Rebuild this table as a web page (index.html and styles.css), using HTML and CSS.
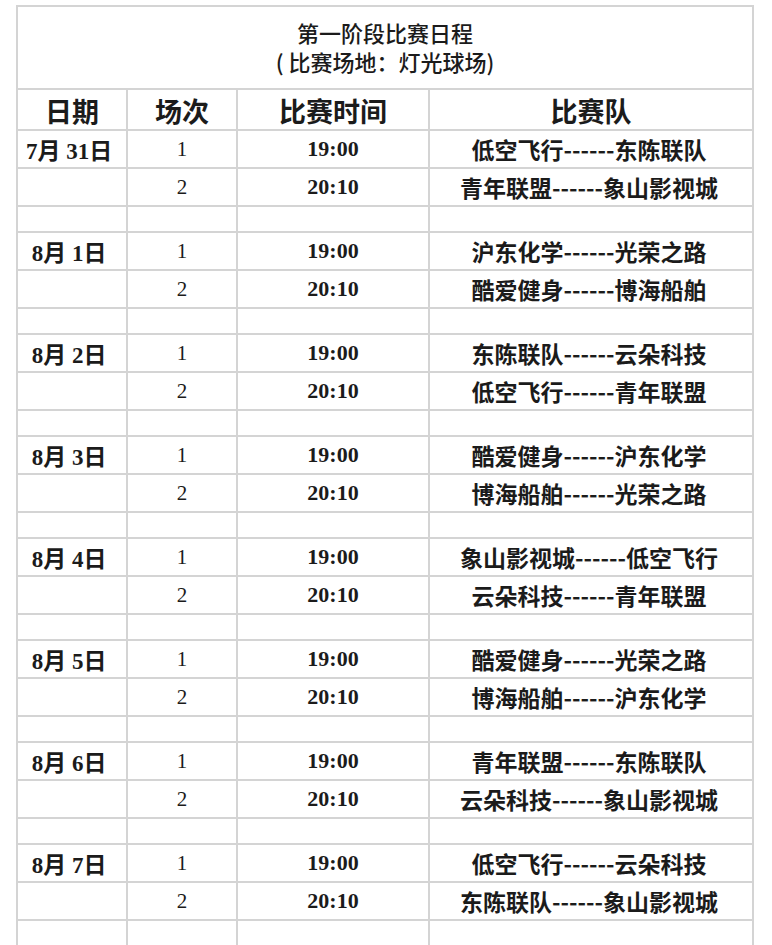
FILE: index.html
```html
<!DOCTYPE html>
<html lang="zh-CN">
<head>
<meta charset="utf-8">
<title>第一阶段比赛日程</title>
<link rel="stylesheet" href="styles.css">
</head>
<body>
<div class="sheet">
  <div class="cell title">第一阶段比赛日程<br>( 比赛场地：灯光球场)</div>

  <div class="cell head">日期</div>
  <div class="cell head">场次</div>
  <div class="cell head">比赛时间</div>
  <div class="cell head">比赛队</div>

  <div class="cell date">7月 31日</div>
  <div class="cell num">1</div>
  <div class="cell time">19:00</div>
  <div class="cell team">低空飞行------东陈联队</div>
  <div class="cell date"></div>
  <div class="cell num">2</div>
  <div class="cell time">20:10</div>
  <div class="cell team">青年联盟------象山影视城</div>
  <div class="cell"></div><div class="cell"></div><div class="cell"></div><div class="cell"></div>

  <div class="cell date">8月 1日</div>
  <div class="cell num">1</div>
  <div class="cell time">19:00</div>
  <div class="cell team">沪东化学------光荣之路</div>
  <div class="cell date"></div>
  <div class="cell num">2</div>
  <div class="cell time">20:10</div>
  <div class="cell team">酷爱健身------博海船舶</div>
  <div class="cell"></div><div class="cell"></div><div class="cell"></div><div class="cell"></div>

  <div class="cell date">8月 2日</div>
  <div class="cell num">1</div>
  <div class="cell time">19:00</div>
  <div class="cell team">东陈联队------云朵科技</div>
  <div class="cell date"></div>
  <div class="cell num">2</div>
  <div class="cell time">20:10</div>
  <div class="cell team">低空飞行------青年联盟</div>
  <div class="cell"></div><div class="cell"></div><div class="cell"></div><div class="cell"></div>

  <div class="cell date">8月 3日</div>
  <div class="cell num">1</div>
  <div class="cell time">19:00</div>
  <div class="cell team">酷爱健身------沪东化学</div>
  <div class="cell date"></div>
  <div class="cell num">2</div>
  <div class="cell time">20:10</div>
  <div class="cell team">博海船舶------光荣之路</div>
  <div class="cell"></div><div class="cell"></div><div class="cell"></div><div class="cell"></div>

  <div class="cell date">8月 4日</div>
  <div class="cell num">1</div>
  <div class="cell time">19:00</div>
  <div class="cell team">象山影视城------低空飞行</div>
  <div class="cell date"></div>
  <div class="cell num">2</div>
  <div class="cell time">20:10</div>
  <div class="cell team">云朵科技------青年联盟</div>
  <div class="cell"></div><div class="cell"></div><div class="cell"></div><div class="cell"></div>

  <div class="cell date">8月 5日</div>
  <div class="cell num">1</div>
  <div class="cell time">19:00</div>
  <div class="cell team">酷爱健身------光荣之路</div>
  <div class="cell date"></div>
  <div class="cell num">2</div>
  <div class="cell time">20:10</div>
  <div class="cell team">博海船舶------沪东化学</div>
  <div class="cell"></div><div class="cell"></div><div class="cell"></div><div class="cell"></div>

  <div class="cell date">8月 6日</div>
  <div class="cell num">1</div>
  <div class="cell time">19:00</div>
  <div class="cell team">青年联盟------东陈联队</div>
  <div class="cell date"></div>
  <div class="cell num">2</div>
  <div class="cell time">20:10</div>
  <div class="cell team">云朵科技------象山影视城</div>
  <div class="cell"></div><div class="cell"></div><div class="cell"></div><div class="cell"></div>

  <div class="cell date">8月 7日</div>
  <div class="cell num">1</div>
  <div class="cell time">19:00</div>
  <div class="cell team">低空飞行------云朵科技</div>
  <div class="cell date"></div>
  <div class="cell num">2</div>
  <div class="cell time">20:10</div>
  <div class="cell team">东陈联队------象山影视城</div>
  <div class="cell"></div><div class="cell"></div><div class="cell"></div><div class="cell"></div>
</div>
</body>
</html>
```

FILE: styles.css
```css
html, body {
  margin: 0;
  padding: 0;
  background: #ffffff;
}

body {
  font-family: "Noto Sans CJK SC", sans-serif;
  color: #1b1b1b;
}

.sheet {
  box-sizing: border-box;
  width: 738px;
  margin: 5px 0 0 16px;
  padding: 2px;
  display: grid;
  grid-template-columns: 108px 108px 190px 322px;
  grid-template-rows: 81px 39px repeat(8, 36px 36px 24px);
  gap: 2px;
  background: #d4d4d4;
}

.cell {
  background: #ffffff;
  display: flex;
  align-items: center;
  justify-content: center;
  white-space: nowrap;
  overflow: hidden;
  box-sizing: border-box;
}

.title {
  grid-column: 1 / span 4;
  display: block;
  text-align: center;
  padding-top: 11px;
  font-size: 22px;
  line-height: 29px;
  font-weight: 500;
}

.head {
  font-size: 27px;
  font-weight: 700;
  line-height: 1;
  padding-top: 2px;
}

.date {
  font-family: "Liberation Serif", "Noto Sans CJK SC", serif;
  font-weight: 700;
  font-size: 23px;
  padding-right: 6px;
}

.num {
  font-family: "Liberation Serif", serif;
  font-size: 21px;
}

.time {
  font-family: "Liberation Serif", serif;
  font-weight: 700;
  font-size: 22px;
}

.team {
  font-size: 23px;
  font-weight: 700;
  padding-right: 4px;
}
```
